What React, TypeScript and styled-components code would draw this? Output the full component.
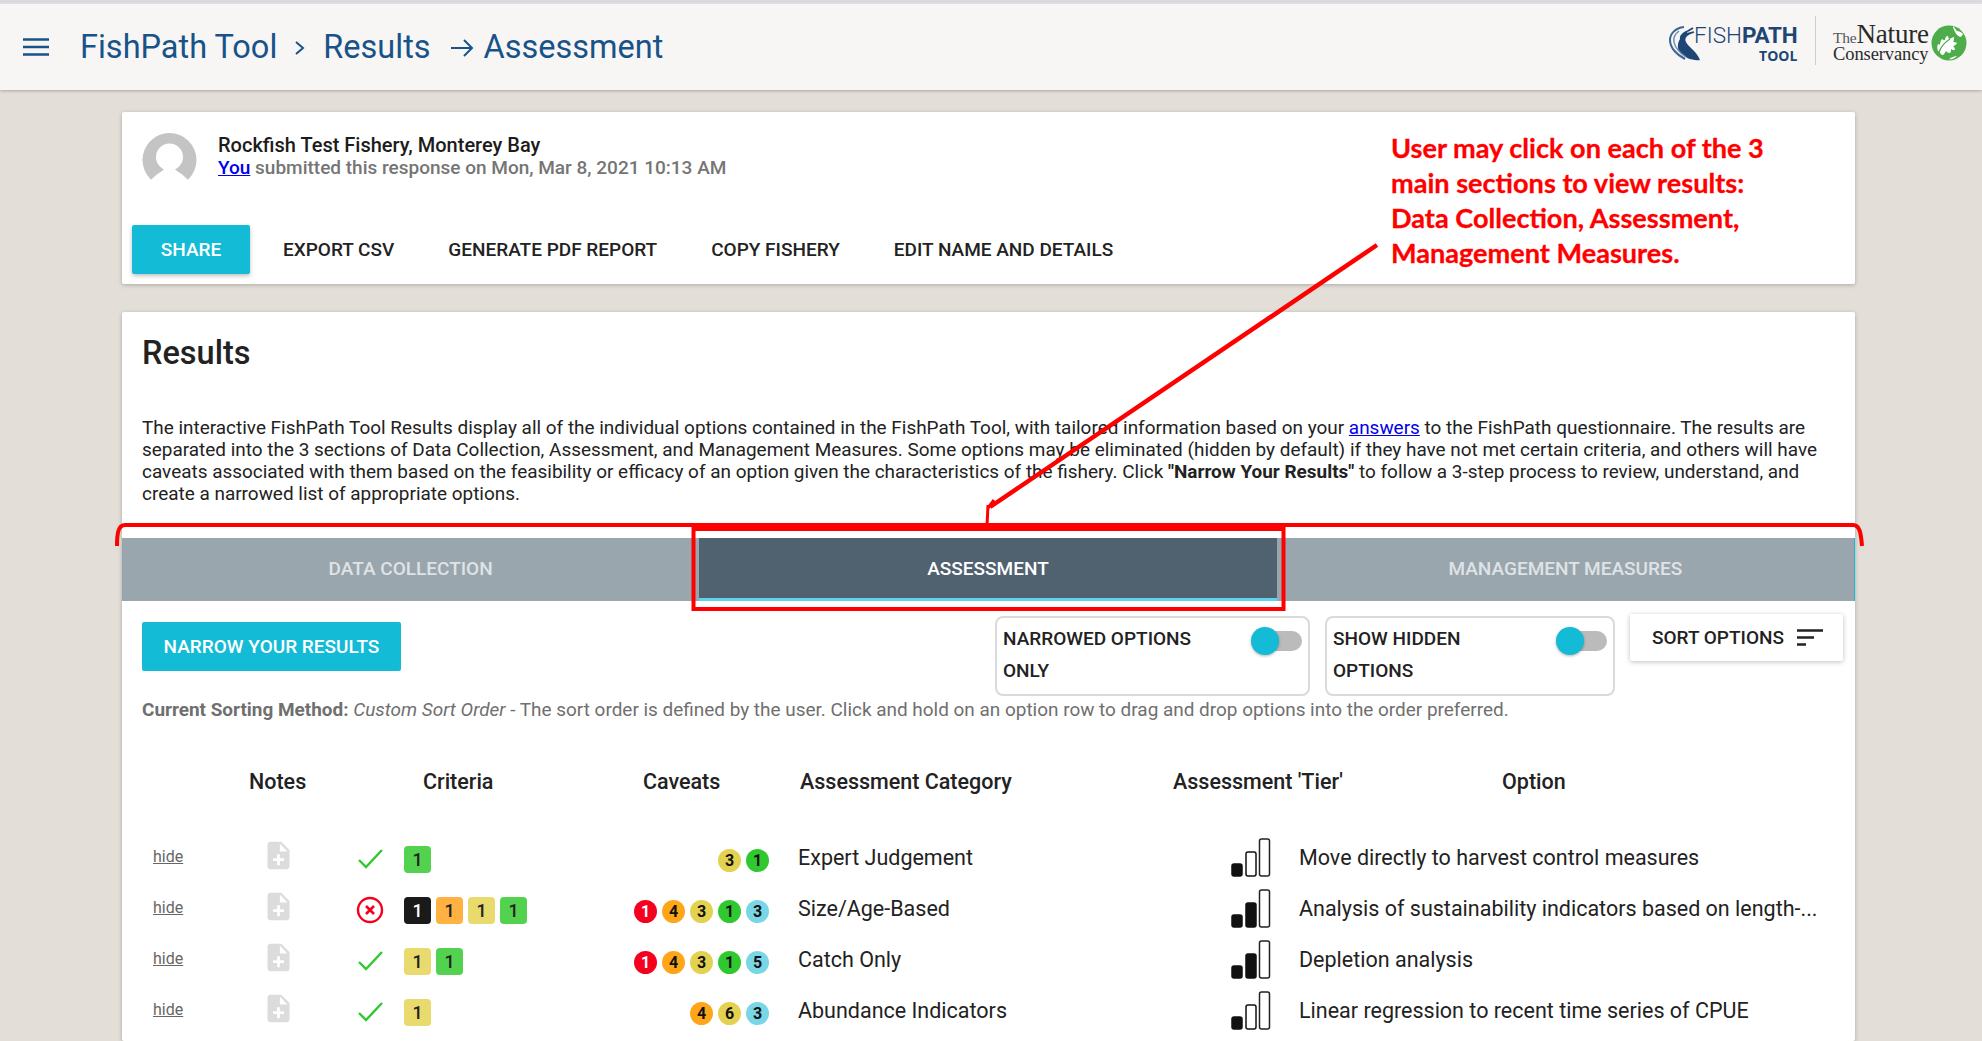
import React from "react";
import styled, { createGlobalStyle } from "styled-components";

const Global = createGlobalStyle`
  html, body { margin: 0; padding: 0; height: 100%; overflow: hidden; background: #e3dfd8; }
  body { font-family: Roboto, "Liberation Sans", sans-serif; color: #222; }
  #root { height: 100%; }
`;
const Page = styled.div`position: relative; height: 1041px; overflow: hidden; display: flex; flex-direction: column;`;
const Header = styled.header`
  flex: none; margin-top: 2px; border-top: 2px solid #dcdcea; box-sizing: border-box; height: 88px;
  background: #f7f6f5; box-shadow: 0 1px 3px rgba(0,0,0,.25);
  display: flex; align-items: center; padding: 0 15px 0 23px;
`;
const Burger = styled.svg`width: 26px; height: 20px; margin-right: 31px; flex: none;`;
const Crumbs = styled.nav`display: flex; align-items: center; color: #175389; font-size: 32.5px; flex: 1;`;
const Sep = styled.svg<{ $l: number; $r: number }>`flex: none; margin: 2px ${(p) => p.$r}px 0 ${(p) => p.$l}px;`;
const Logos = styled.div`display: flex; align-items: flex-start; flex: none; height: 49px; margin-top: -13px;`;
const FishLogo = styled.div`display: flex; align-items: flex-start; color: #1d4675; width: 127px;`;
const FishMark = styled.svg`flex: none; margin-top: 10px;`;
const FishWords = styled.div`display: flex; flex-direction: column; align-items: flex-end; margin: 8px 0 0 -7px; font-family: Roboto, sans-serif;`;
const FishTop = styled.div`font-size: 22.5px; line-height: 22px; font-weight: 300; white-space: nowrap; b { font-weight: 700; letter-spacing: -.2px; }`;
const FishSub = styled.div`font-family: "Open Sans", sans-serif; font-size: 14px; line-height: 14px; font-weight: 700; margin-top: 3px;`;
const LogoDivider = styled.div`width: 1px; height: 49px; background: #cfcdc9; margin: 0 17px 0 19px; flex: none;`;
const TncWords = styled.div`font-family: "Liberation Serif", serif; color: #2a2a2a; width: 98px; white-space: nowrap; margin-top: 9px;`;
const TncTop = styled.div`font-size: 27px; line-height: 18px; letter-spacing: -.2px; small { font-size: 15.5px; color: #555; letter-spacing: -.2px; }`;
const TncBottom = styled.div`font-size: 18.5px; line-height: 15px; letter-spacing: -.1px;`;
const Globe = styled.svg`flex: none; margin-top: 9px;`;

const Main = styled.main`flex: 1; padding: 22px 127px 0 122px; display: flex; flex-direction: column; gap: 28px; min-height: 0;`;
const Card = styled.section`background: #fff; box-shadow: 0 1px 4px rgba(0,0,0,.25); border-radius: 2px;`;
const TopCard = styled(Card)`height: 172px; flex: none; padding: 21px 10px 0 10px; box-sizing: border-box;`;
const Who = styled.div`display: flex; padding-left: 10px; gap: 21px; height: 92px;`;
const Avatar = styled.svg`width: 55px; height: 52px; flex: none;`;
const WhoText = styled.div`font-size: 20px; line-height: 22px; font-weight: 500; color: #1c1c1c; padding-top: 1px;`;
const Sub = styled.div`font-size: 19px; margin-top: 1px; color: #757575; a { color: #0000ee; text-decoration: underline; }`;
const Actions = styled.div`display: flex; align-items: center; gap: 54px;`;
const Primary = styled.button`
  border: 0; background: #14bbd6; color: #fff; font: 500 19px Roboto, sans-serif; text-transform: uppercase;
  border-radius: 2px; box-shadow: 0 2px 4px rgba(0,0,0,.25); height: 49px; padding: 0 22px;
`;
const Share = styled(Primary)`width: 118px; padding: 0; margin-right: -21px;`;
const Flat = styled.span`font-size: 19px; font-weight: 500; color: #222; text-transform: uppercase;`;

const Results = styled(Card)`flex: 1; min-height: 0; overflow: hidden;`;
const Intro = styled.div`padding: 22px 20px 0 20px; height: 204px; box-sizing: border-box;`;
const H = styled.h2`margin: 0; font-size: 32.5px; line-height: 38px; font-weight: 500; color: #222;`;
const Para = styled.p`margin: 45px 0 0; font-size: 18.95px; line-height: 22px; color: #222; white-space: nowrap; a { color: #0000ee; text-decoration: underline; }`;
const TabBar = styled.div`display: grid; grid-template-columns: repeat(3, 1fr); height: 63px; margin-top: 22px; border-right: 1px solid #14bbd6; box-sizing: border-box;`;
const Tab = styled.div<{ $active?: boolean }>`
  display: flex; align-items: center; justify-content: center; font-size: 19px; font-weight: 500; text-transform: uppercase;
  background: ${(p) => (p.$active ? "#506170" : "#9aa6ad")};
  color: ${(p) => (p.$active ? "#fff" : "#dfe3e6")};
  border-bottom: 3px solid ${(p) => (p.$active ? "#5dd5ea" : "#9aa6ad")};
`;
const Controls = styled.div`display: flex; align-items: flex-start; padding: 13px 12px 0 20px; height: 82px;`;
const Narrow = styled(Primary)`width: 259px; height: 49px; padding: 0; margin-top: 8px; box-shadow: none; margin-right: auto;`;
const ToggleBox = styled.div<{ $w: number }>`
  width: ${(p) => p.$w}px; height: 80px; box-sizing: border-box; border: 2px solid #dadada; border-radius: 8px;
  position: relative; margin-top: 2px; margin-right: 15px; padding: 5px 6px; font-size: 19px; font-weight: 500; line-height: 32px; color: #222;
`;
const Track = styled.span`position: absolute; right: 6px; top: 13px; width: 37px; height: 20px; border-radius: 10px; background: #bbb;`;
const Thumb = styled.span`position: absolute; left: -14px; top: -4px; width: 28px; height: 28px; border-radius: 50%; background: #14bbd6; box-shadow: 0 1px 3px rgba(0,0,0,.3);`;
const SortBtn = styled.div`
  width: 213px; height: 47px; box-sizing: border-box; background: #fff; box-shadow: 0 1px 5px rgba(0,0,0,.25); border-radius: 2px;
  display: flex; align-items: center; gap: 13px; padding-left: 22px; font-size: 19px; font-weight: 500; color: #222;
`;
const Sorting = styled.p`margin: 0; padding: 3px 20px 0; font-size: 18.95px; line-height: 22px; color: #6f6f6f; white-space: nowrap; b { font-weight: 700; } i { font-style: italic; }`;

const Heads = styled.div`display: grid; grid-template-columns: 174px 220px 157px 373px 329px 1fr; padding-left: 127px; margin-top: 48px; font-size: 21.5px; font-weight: 500; color: #222; line-height: 26px;`;
const HeadCell = styled.div`white-space: nowrap;`;
const Rows = styled.div`margin-top: 37px; display: flex; flex-direction: column;`;
const Row = styled.div`display: flex; align-items: center; height: 51px; font-size: 21.5px; color: #222;`;
const Hide = styled.span`width: 140px; padding-left: 31px; box-sizing: border-box; font-size: 16px; color: #666; text-decoration: underline; flex: none; margin-top: -3px;`;
const Note = styled.svg`width: 33px; height: 33px; flex: none; margin: -4px 60px 0 0;`;
const Status = styled.svg`width: 30px; height: 30px; flex: none; margin: 3px 19px 0 0;`;
const Badges = styled.div`display: flex; gap: 5px; width: 197px; flex: none; margin-top: 3px;`;
const Badge = styled.span<{ $bg: string; $fg?: string }>`
  width: 27px; height: 27px; border-radius: 4px; display: flex; align-items: center; justify-content: center;
  background: ${(p) => p.$bg}; color: ${(p) => p.$fg || "#222"}; font-size: 18px; font-weight: 500;
`;
const Dots = styled.div`display: flex; gap: 5px; justify-content: flex-end; width: 168px; flex: none; margin-top: 6px;`;
const Dot = styled.span<{ $bg: string; $fg?: string }>`
  width: 23px; height: 23px; border-radius: 50%; display: flex; align-items: center; justify-content: center;
  background: ${(p) => p.$bg}; color: ${(p) => p.$fg || "#111"}; font-size: 16px; font-weight: 700;
`;
const Category = styled.div`margin-left: 29px; width: 433px; flex: none;`;
const TierIcon = styled.svg`width: 40px; height: 39px; flex: none; margin-right: 28px; margin-top: -1px;`;
const Opt = styled.div`white-space: nowrap;`;

const Annotation = styled.div`position: absolute; left: 1391px; top: 130px; font: 700 27.1px/35px Lato, sans-serif; color: #f00; white-space: nowrap; -webkit-text-stroke: .3px #f00;`;
const Overlay = styled.svg`position: absolute; left: 0; top: 0; width: 1982px; height: 1041px; pointer-events: none;`;

const G = "#52d24e", Y = "#e9da6d", O = "#ffb142", K = "#1a1a1a";
const dR = "#f5001e", dO = "#ffa51a", dY = "#e3d24f", dG = "#2fc92f", dB = "#79d6e6";

const Tier = ({ n }: { n: number }) => (
  <TierIcon viewBox="0 0 40 39">
    <rect x="1" y="26" width="10" height="12" rx="2" fill={n >= 1 ? "#111" : "none"} stroke="#111" strokeWidth="1.5" />
    <rect x="15" y="14" width="10" height="24" rx="2" fill={n >= 2 ? "#111" : "none"} stroke="#111" strokeWidth="1.5" />
    <rect x="28.5" y="1" width="10" height="37" rx="2" fill={n >= 3 ? "#111" : "none"} stroke="#222" strokeWidth="1.5" />
  </TierIcon>
);
const NoteIcon = () => (
  <Note viewBox="0 0 24 24"><path fill="#dcdcdc" d="M14 2H6c-1.1 0-1.99.9-1.99 2L4 20c0 1.1.89 2 1.99 2H18c1.1 0 2-.9 2-2V8l-6-6zm2 14h-3v3h-2v-3H8v-2h3v-3h2v3h3v2zm-3-7V3.5L18.5 9H13z" /></Note>
);
const Check = () => (
  <Status viewBox="0 0 30 30"><path d="M4 16l7 7L27 6" fill="none" stroke="#2fc92f" strokeWidth="2.4" /></Status>
);
const Cross = () => (
  <Status viewBox="0 0 30 30">
    <circle cx="15" cy="15" r="12" fill="none" stroke="#f5001e" strokeWidth="2.4" />
    <path d="M11 11l8 8M19 11l-8 8" stroke="#f5001e" strokeWidth="2.6" />
  </Status>
);

const rows = [
  { ok: true, b: [[G]], d: [[dY, "3"], [dG, "1"]], cat: "Expert Judgement", t: 1, opt: "Move directly to harvest control measures" },
  { ok: false, b: [[K, "#fff"], [O], [Y], [G]], d: [[dR, "1", "#fff"], [dO, "4"], [dY, "3"], [dG, "1"], [dB, "3"]], cat: "Size/Age-Based", t: 2, opt: "Analysis of sustainability indicators based on length-..." },
  { ok: true, b: [[Y], [G]], d: [[dR, "1", "#fff"], [dO, "4"], [dY, "3"], [dG, "1"], [dB, "5"]], cat: "Catch Only", t: 2, opt: "Depletion analysis" },
  { ok: true, b: [[Y]], d: [[dO, "4"], [dY, "6"], [dB, "3"]], cat: "Abundance Indicators", t: 1, opt: "Linear regression to recent time series of CPUE" },
];

export default function App() {
  return (
    <Page>
      <Global />
      <Header>
        <Burger viewBox="0 0 26 20"><path d="M0 2.5h26M0 10h26M0 17.5h26" stroke="#175389" strokeWidth="2.6" /></Burger>
        <Crumbs>
          FishPath Tool
          <Sep $l={16} $r={16} width="14" height="20" viewBox="0 0 14 20"><path d="M3 4l7 6-7 6" fill="none" stroke="#175389" strokeWidth="2" /></Sep>
          Results
          <Sep $l={19} $r={10} width="24" height="22" viewBox="0 0 24 22"><path d="M1 11h21M14 3l8 8-8 8" fill="none" stroke="#175389" strokeWidth="2" /></Sep>
          Assessment
        </Crumbs>
        <Logos>
          <FishLogo>
            <FishMark width="32" height="35" viewBox="0 0 32 35">
              <path d="M11 13C10 9 15 5 20 4l-2 3 6 0c-6 2-9 5-7 9 2 5 10 8 14 18-7 1-16-2-21-9-2-4-1-9 1-12z" fill="#1d4675" />
              <path d="M15 1C6 2 1 8 1 14c0 8 7 15 15 19" fill="none" stroke="#3d6593" strokeWidth="2" />
              <path d="M10 5C6 8 4 11 5 16c1 6 6 11 12 15" fill="none" stroke="#6d8cb0" strokeWidth="1.5" />
              <path d="M24 2l-5 3M25 6l-6 1.500" stroke="#1d4675" strokeWidth="1.8" />
            </FishMark>
            <FishWords>
              <FishTop>FISH<b>PATH</b></FishTop>
              <FishSub>TOOL</FishSub>
            </FishWords>
          </FishLogo>
          <LogoDivider />
          <TncWords>
            <TncTop><small>The</small>Nature</TncTop>
            <TncBottom>Conservancy</TncBottom>
          </TncWords>
          <Globe width="36" height="36" viewBox="0 0 36 36">
            <circle cx="18" cy="18" r="17.5" fill="#4ead4a" />
            <path d="M7 26c-1-2-1-5 0-7 1 0 2 1 2 1 0-3 1-5 2-6 1 1 2 1 3 1 0-2 1-4 3-4 0 2 1 3 2 3 1-1 3-2 4-2 0 2 0 4-1 5 1 0 3 0 4 1-1 2-3 3-4 3 1 1 2 2 2 4-2 0-3 0-4-1 0 2 0 3-1 4-2 0-3-1-4-2-1 2-2 3-3 4-2 0-3-2-3-3z" fill="#fff" />
            <path d="M22 1c2 2 3 4 4 5 2 0 4 1 6 3-1 2-2 3-3 3-2-1-4-3-5-5-1-2-2-4-2-6zM18 34c3-2 6-3 8-3-2 2-5 4-8 3z" fill="#fff" />
            <path d="M8 27c2-5 6-10 11-13" stroke="#4ead4a" strokeWidth="1.2" fill="none" />
          </Globe>
        </Logos>
      </Header>
      <Main>
        <TopCard>
          <Who>
            <Avatar viewBox="0 0 55 52">
              <circle cx="27.500" cy="27" r="27" fill="#c4c4c4" />
              <circle cx="27.500" cy="24" r="13.500" fill="#fff" />
              <path d="M9 47C14 41 20 39 23 35h9c3 4 9 6 14 12L52 56H3z" fill="#fff" />
            </Avatar>
            <WhoText>
              Rockfish Test Fishery, Monterey Bay
              <Sub><a>You</a> submitted this response on Mon, Mar 8, 2021 10:13 AM</Sub>
            </WhoText>
          </Who>
          <Actions>
            <Share>Share</Share>
            <Flat>Export CSV</Flat>
            <Flat>Generate PDF Report</Flat>
            <Flat>Copy Fishery</Flat>
            <Flat>Edit Name and Details</Flat>
          </Actions>
        </TopCard>
        <Results>
          <Intro>
            <H>Results</H>
            <Para>
              The interactive FishPath Tool Results display all of the individual options contained in the FishPath Tool, with tailored information based on your <a>answers</a> to the FishPath questionnaire. The results are<br />
              separated into the 3 sections of Data Collection, Assessment, and Management Measures. Some options may be eliminated (hidden by default) if they have not met certain criteria, and others will have<br />
              caveats associated with them based on the feasibility or efficacy of an option given the characteristics of the fishery. Click <b>"Narrow Your Results"</b> to follow a 3-step process to review, understand, and<br />
              create a narrowed list of appropriate options.
            </Para>
          </Intro>
          <TabBar>
            <Tab>Data Collection</Tab>
            <Tab $active>Assessment</Tab>
            <Tab>Management Measures</Tab>
          </TabBar>
          <Controls>
            <Narrow>Narrow Your Results</Narrow>
            <ToggleBox $w={315}>NARROWED OPTIONS<br />ONLY<Track><Thumb /></Track></ToggleBox>
            <ToggleBox $w={290}>SHOW HIDDEN<br />OPTIONS<Track><Thumb /></Track></ToggleBox>
            <SortBtn>
              SORT OPTIONS
              <svg width="26" height="17" viewBox="0 0 26 17"><path d="M0 1.5h26M0 8.500h17M0 15.500h9" stroke="#222" strokeWidth="2.4" /></svg>
            </SortBtn>
          </Controls>
          <Sorting><b>Current Sorting Method:</b> <i>Custom Sort Order</i> - The sort order is defined by the user. Click and hold on an option row to drag and drop options into the order preferred.</Sorting>
          <Heads>
            <HeadCell>Notes</HeadCell>
            <HeadCell>Criteria</HeadCell>
            <HeadCell>Caveats</HeadCell>
            <HeadCell>Assessment Category</HeadCell>
            <HeadCell>Assessment 'Tier'</HeadCell>
            <HeadCell>Option</HeadCell>
          </Heads>
          <Rows>
            {rows.map((r, i) => (
              <Row key={i}>
                <Hide>hide</Hide>
                <NoteIcon />
                {r.ok ? <Check /> : <Cross />}
                <Badges>{r.b.map((x, j) => <Badge key={j} $bg={x[0]} $fg={x[1]}>1</Badge>)}</Badges>
                <Dots>{r.d.map((x, j) => <Dot key={j} $bg={x[0]} $fg={x[2]}>{x[1]}</Dot>)}</Dots>
                <Category>{r.cat}</Category>
                <Tier n={r.t} />
                <Opt>{r.opt}</Opt>
              </Row>
            ))}
          </Rows>
        </Results>
      </Main>
      <Annotation>
        User may click on each of the 3<br />
        main sections to view results:<br />
        Data Collection, Assessment,<br />
        Management Measures.
      </Annotation>
      <Overlay viewBox="0 0 1982 1041">
        <path d="M117 546c0-12 1-21 8-21H1853c7 0 8 9 9 21" fill="none" stroke="#f00" strokeWidth="4" />
        <rect x="693.500" y="529" width="590" height="80" fill="none" stroke="#f00" strokeWidth="4" />
        <path d="M1377 245L990 507" fill="none" stroke="#f00" strokeWidth="4.500" />
        <path d="M988 505l-1 21M994 500l-6 8" fill="none" stroke="#f00" strokeWidth="3" />
      </Overlay>
    </Page>
  );
}
